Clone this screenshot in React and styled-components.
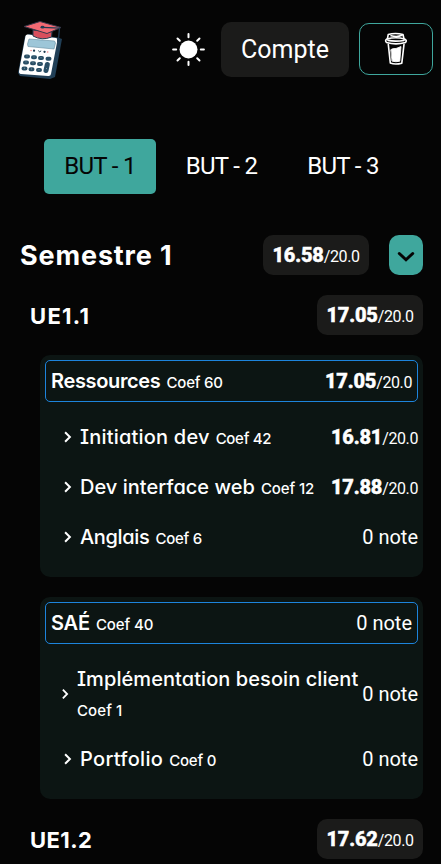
import React from "react";
import styled, { createGlobalStyle } from "styled-components";

const Global = createGlobalStyle`
  * { box-sizing: border-box; }
  body { margin: 0; background: #050505; color: #fff; font-family: Roboto, sans-serif; overflow: hidden; }
  button { font: inherit; color: inherit; border: 0; padding: 0; background: none; }
  h2, h3, p { margin: 0; }
`;

const Page = styled.div`
  width: 441px;
  height: 864px;
  overflow: hidden;
  background: #050505;
`;

const Header = styled.header`
  display: flex;
  align-items: center;
  height: 99px;
  padding: 0 8px 0 14px;
`;

const LogoLink = styled.div`
  margin-right: auto;
  width: 52px;
  height: 62px;
  svg { display: block; }
`;

const ThemeButton = styled.button`
  width: 34px;
  height: 34px;
  margin-right: 16px;
  svg { display: block; }
`;

const AccountButton = styled.button`
  width: 128px;
  height: 55px;
  margin-right: 10px;
  border-radius: 10px;
  background: #1b1b1a;
  font-size: 25px;
  line-height: 55px;
`;

const CupButton = styled.button`
  width: 74px;
  height: 52px;
  margin-bottom: 1px;
  display: flex;
  align-items: center;
  justify-content: center;
  border: 1px solid #3fa79d;
  border-radius: 10px;
`;

const Tabs = styled.nav`
  display: flex;
  gap: 9.5px;
  margin: 40px 0 41px 44px;
`;

const Tab = styled.button`
  width: 112px;
  height: 55px;
  border-radius: 5px;
  font-size: 24px;
  line-height: 55px;
  letter-spacing: -0.7px;
  background: ${(p) => (p.$active ? "#3fa79d" : "transparent")};
  color: ${(p) => (p.$active ? "#050505" : "#fff")};
`;

const Line = styled.div`
  display: flex;
  align-items: center;
  height: 40px;
  margin-bottom: 20px;
  padding: 0 18px 0 ${(p) => p.$indent}px;
`;

const Title = styled.h2`
  margin-right: auto;
  padding-top: 2px;
  font-family: Inter, sans-serif;
  font-weight: 700;
  font-size: ${(p) => p.$size}px;
  line-height: 40px;
  letter-spacing: ${(p) => p.$track || 0}px;
  white-space: nowrap;
`;

const Badge = styled.div`
  width: 106px;
  height: 40px;
  display: flex;
  align-items: center;
  justify-content: center;
  border-radius: 10px;
  background: #1b1b1a;
`;

const ToggleButton = styled.button`
  width: 34px;
  height: 40px;
  margin-left: 20px;
  padding-top: 2px;
  display: flex;
  align-items: center;
  justify-content: center;
  border-radius: 10px;
  background: #3fa79d;
`;

const ScoreText = styled.span`
  padding-top: 2px;
  font-size: 16px;
  line-height: 30px;
  letter-spacing: -0.4px;
  white-space: nowrap;
  b {
    font-size: 20px;
    font-weight: 800;
    letter-spacing: -0.15px;
    -webkit-text-stroke: 0.5px #fff;
  }
`;

const NoteText = styled.span`
  font-size: 20px;
  line-height: 30px;
  white-space: nowrap;
`;

const Card = styled.section`
  margin: 0 18px 20px 40px;
  padding: 5px 5px 15px;
  border-radius: 10px;
  background: #0c1513;
`;

const CardHead = styled.div`
  display: flex;
  align-items: center;
  justify-content: space-between;
  height: 42px;
  margin-bottom: 10px;
  padding: 0 5px;
  border: 1px solid #1d84dc;
  border-radius: 5px;
`;

const Item = styled.div`
  display: flex;
  align-items: center;
  height: ${(p) => (p.$tall ? 80 : 50)}px;
  padding-left: ${(p) => (p.$tall ? 16 : 18)}px;
  svg { flex: none; margin-right: 8px; }
`;

const Label = styled.p`
  margin-right: auto;
  padding-top: 2px;
  display: flex;
  flex-direction: ${(p) => (p.$stacked ? "column" : "row")};
  align-items: ${(p) => (p.$stacked ? "flex-start" : "baseline")};
  column-gap: 6px;
  font-family: Inter, sans-serif;
  font-feature-settings: "cv08", "cv11";
  white-space: nowrap;
`;

const Name = styled.span`
  font-size: 20px;
  line-height: 31px;
  font-weight: ${(p) => (p.$strong ? 600 : 450)};
  letter-spacing: ${(p) => p.$track || 0}px;
`;

const Coef = styled.span`
  font-size: 15px;
  line-height: 31px;
  font-weight: 500;
  letter-spacing: ${(p) => p.$track || 0}px;
`;

const Logo = () => (
  <svg width="52" height="62" viewBox="14 18 52 62">
    <path d="M29 33 58 36.500 62 38 55 76 50 78 20 75 18 72 25 35Z" fill="#213f56" />
    <path d="M28 33.500 56 37Q58 37.500 57.500 39L51 73Q50.500 75.500 48 75L21 73Q18.500 72.500 19 70L25.500 35Q26 33 28 33.500Z" fill="#fff" />
    <path d="M29 38 54.500 40 55.500 42 54 48 28 45.500 27.500 43Z" fill="#9dc6d8" stroke="#638ba0" strokeWidth=".6" />
    <g strokeWidth="2.200" strokeLinecap="round">
      <path d="M31 49.500h.1M47.600 51h.1" stroke="#f28a8d" strokeWidth="1.600" />
      <path d="M34 49.700h.1M44.500 50.800h.1" stroke="#19384d" />
      <path d="M38.500 50q1 1.800 2.400.2" stroke="#19384d" strokeWidth="1" fill="none" />
    </g>
    <g stroke="#294e65" strokeWidth="4" strokeLinecap="round">
      <path d="M26 55.500h2M33 56.200h2M40 57h2M47.500 57.700h2M25 61.500h2M32 62.200h2M39 63h2M23.500 67.500h2M30.500 68.200h2M38 69h2" />
      <path d="M47.300 63.500 46 69.500" strokeWidth="5" />
    </g>
    <path d="M26.500 55h1M33.500 56h1M40.500 56.700h1M25.500 61h1M32.500 61.800h1M39.500 62.600h1M24 67.200h1M31 68h1M38.500 68.700h1M46.500 67v1" stroke="#9bb4bf" strokeWidth=".7" />
    <path d="M33 29 52 31 51.500 36Q42 40 33 35Z" fill="#d94f5d" stroke="#263d50" />
    <path d="M24 25.500 40 20.500 61 26.500 47 32.500Z" fill="#f36a73" stroke="#38384a" strokeWidth="1" />
    <path d="M42.500 26.300 59.500 27 58.500 38" fill="none" stroke="#203b52" strokeWidth="1.300" />
    <ellipse cx="42.500" cy="26.200" rx="2" ry="1.400" fill="#203b52" />
    <path d="M58.500 37v4" stroke="#203b52" strokeWidth="3" />
  </svg>
);

const Sun = () => (
  <svg width="34" height="34" viewBox="-17.500 -16.500 34 34">
    <circle r="9" fill="#fff" />
    <path d="M0-12.300V-15.400M0 12.300V15.400M12.300 0H15.400M-12.300 0H-15.400M8.700-8.700 11-11M-8.700-8.700-11-11M8.700 8.700 11 11M-8.700 8.700-11 11" stroke="#fff" strokeWidth="2" strokeLinecap="round" />
  </svg>
);

const Cup = () => (
  <svg width="24" height="34" viewBox="0 0 24 34" fill="none" stroke="#fff" strokeWidth="1.600" strokeLinecap="round" strokeLinejoin="round">
    <path d="M3.500 6.500 4.200 2.600Q11 .5 19 2.500L20 7" />
    <path d="M7 3.700Q13 5.400 18 3.300M3 7Q12 4.500 21 7.200Q23.200 8.500 21.500 10.500Q12 13.200 2.500 10.500Q.5 8.500 3 7ZM4 8.400Q11 9.800 20 8.500" />
    <path d="M4.300 12.300 6.300 31Q11 33 17.800 31.200L20 12.300" />
    <path d="M7 17.500Q9 16 12 16.500L17 14.500 15.800 29.200Q12 30.300 8.300 29.200Z" fill="#fff" strokeWidth=".8" />
  </svg>
);

const Chevron = ({ small }) => (
  <svg width={small ? 8 : 9} height="14" viewBox="0 0 9 14" fill="none">
    <path d="M2.100 2.200 6.900 7 2.100 11.800" stroke="#fff" strokeWidth="2" />
  </svg>
);

const Score = ({ value }) =>
  value ? (
    <ScoreText><b>{value}</b>/20.0</ScoreText>
  ) : (
    <NoteText>0 note</NoteText>
  );

const groups = [
  {
    name: "Ressources", coef: 60, score: "17.05", track: -0.35, ct: -0.2,
    items: [
      { name: "Initiation dev", coef: 42, score: "16.81", track: 0.2, ct: -0.3 },
      { name: "Dev interface web", coef: 12, score: "17.88", track: 0.02, ct: -0.1 },
      { name: "Anglais", coef: 6, track: -0.35, ct: -0.25 },
    ],
  },
  {
    name: "SAÉ", coef: 40, track: -0.2, ct: -0.1,
    items: [
      { name: "Implémentation besoin client", coef: 1, tall: true, track: 0.07, ct: 0.1 },
      { name: "Portfolio", coef: 0, track: 0.3, ct: -0.2 },
    ],
  },
];

const Group = ({ group }) => (
  <Card>
    <CardHead>
      <Label>
        <Name $strong $track={group.track}>{group.name}</Name>
        <Coef $track={group.ct}>Coef {group.coef}</Coef>
      </Label>
      <Score value={group.score} />
    </CardHead>
    {group.items.map((item) => (
      <Item key={item.name} $tall={item.tall}>
        <Chevron small={item.tall} />
        <Label $stacked={item.tall}>
          <Name $track={item.track}>{item.name}</Name>
          <Coef $track={item.ct}>Coef {item.coef}</Coef>
        </Label>
        <Score value={item.score} />
      </Item>
    ))}
  </Card>
);

export default function App() {
  return (
    <>
      <Global />
      <Page>
        <Header>
          <LogoLink><Logo /></LogoLink>
          <ThemeButton aria-label="Thème"><Sun /></ThemeButton>
          <AccountButton>Compte</AccountButton>
          <CupButton aria-label="Café"><Cup /></CupButton>
        </Header>
        <Tabs>
          <Tab $active>BUT - 1</Tab>
          <Tab>BUT - 2</Tab>
          <Tab>BUT - 3</Tab>
        </Tabs>
        <Line $indent={20}>
          <Title $size={27} $track={0.85}>Semestre 1</Title>
          <Badge><Score value="16.58" /></Badge>
          <ToggleButton aria-label="Replier">
            <svg width="18" height="12" viewBox="0 0 18 12" fill="none">
              <path d="M2.300 3.500 9 9.800 15.700 3.500" stroke="#050505" strokeWidth="3" strokeLinecap="round" />
            </svg>
          </ToggleButton>
        </Line>
        <Line $indent={30}>
          <Title $size={22} $track={1.3}>UE1.1</Title>
          <Badge><Score value="17.05" /></Badge>
        </Line>
        {groups.map((group) => <Group key={group.name} group={group} />)}
        <Line $indent={30}>
          <Title $size={22} $track={0.4}>UE1.2</Title>
          <Badge><Score value="17.62" /></Badge>
        </Line>
      </Page>
    </>
  );
}
